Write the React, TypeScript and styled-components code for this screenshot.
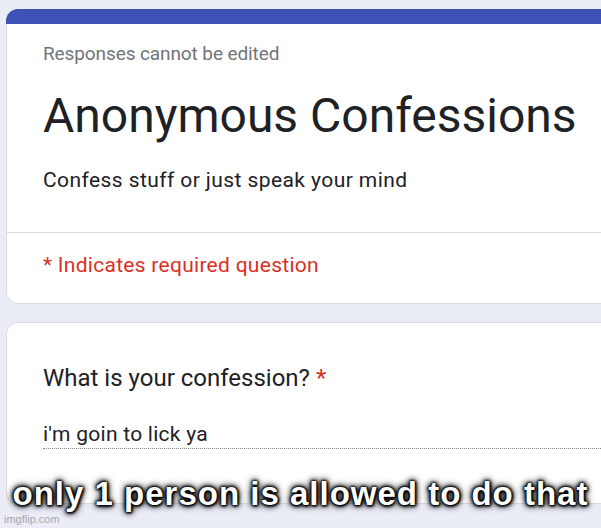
import React from "react";
import styled, { createGlobalStyle } from "styled-components";

const GlobalStyle = createGlobalStyle`
  html, body {
    margin: 0;
    padding: 0;
    background: #eaecf6;
  }
  body {
    width: 601px;
    height: 528px;
    overflow: hidden;
    font-family: Roboto, "Noto Sans", Arial, sans-serif;
  }
`;

const Page = styled.div`
  position: relative;
  width: 601px;
  height: 528px;
  overflow: hidden;
  padding: 9px 0 0 6px;
  box-sizing: border-box;
  display: flex;
  flex-direction: column;
  gap: 18px;
`;

const HeaderCard = styled.section`
  width: 720px;
  display: flex;
  flex-direction: column;
`;

const TopBar = styled.div`
  height: 15px;
  background: #3f51b5;
  border-radius: 12px 12px 0 0;
`;

const HeaderBody = styled.div`
  background: #fff;
  border: 1px solid #dadce0;
  border-top: none;
  border-radius: 0 0 12px 12px;
`;

const Section = styled.div<{ $top: number; $bottom: number; $divider?: boolean }>`
  padding: ${({ $top, $bottom }) => `${$top}px 36px ${$bottom}px 36px`};
  border-top: ${({ $divider }) => ($divider ? "1px solid #dadce0" : "none")};
`;

const Notice = styled.div`
  font-size: 19px;
  line-height: 24px;
  color: #70757a;
  letter-spacing: -0.1px;
`;

const Title = styled.h1`
  margin: 22px 0 0;
  font-size: 48px;
  line-height: 56px;
  font-weight: 400;
  color: #202124;
`;

const Description = styled.p`
  margin: 22px 0 0;
  font-size: 21px;
  line-height: 28px;
  letter-spacing: 0.42px;
  color: #202124;
`;

const Required = styled.div`
  font-size: 21px;
  line-height: 28px;
  letter-spacing: 0.28px;
  color: #d93025;
`;

const QuestionCard = styled.section`
  width: 720px;
  background: #fff;
  border: 1px solid #dadce0;
  border-radius: 12px;
  padding: 39px 0 54px 36px;
  box-sizing: border-box;
`;

const Question = styled.div`
  font-size: 24px;
  line-height: 32px;
  color: #202124;
`;

const Star = styled.span`
  color: #d93025;
`;

const Answer = styled.div`
  margin-top: 26px;
  font-size: 21px;
  line-height: 28px;
  letter-spacing: 0.26px;
  color: #202124;
  border-bottom: 1px dotted #80868b;
`;

const Caption = styled.div`
  position: absolute;
  left: 0;
  right: 0;
  top: 474px;
  text-align: center;
  font-family: "Liberation Sans", Arial, sans-serif;
  font-weight: 700;
  font-size: 33px;
  line-height: 40px;
  letter-spacing: 1px;
  color: #fff;
  white-space: nowrap;
  text-shadow: 0 0 1px #000, 0 0 2px #000, 0 0 3px #000, 0 0 4px #000,
    0 0 6px #000, 0 0 8px #000, 1px 1px 3px #000;
`;

const Watermark = styled.div`
  position: absolute;
  left: 4px;
  top: 512px;
  font-family: "Liberation Sans", Arial, sans-serif;
  font-size: 11px;
  line-height: 14px;
  color: #a8a8ad;
`;

export default function App() {
  return (
    <>
      <GlobalStyle />
      <Page>
        <HeaderCard>
          <TopBar />
          <HeaderBody>
            <Section $top={18} $bottom={38}>
              <Notice>Responses cannot be edited</Notice>
              <Title>Anonymous Confessions</Title>
              <Description>Confess stuff or just speak your mind</Description>
            </Section>
            <Section $top={18} $bottom={24} $divider>
              <Required>* Indicates required question</Required>
            </Section>
          </HeaderBody>
        </HeaderCard>
        <QuestionCard>
          <Question>
            What is your confession? <Star>*</Star>
          </Question>
          <Answer>i'm goin to lick ya</Answer>
        </QuestionCard>
        <Caption>only 1 person is allowed to do that</Caption>
        <Watermark>imgflip.com</Watermark>
      </Page>
    </>
  );
}
